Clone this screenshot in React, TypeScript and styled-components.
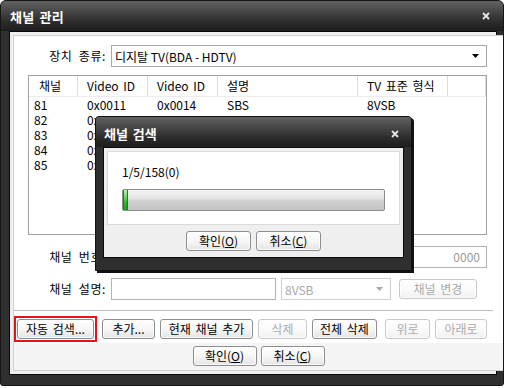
import React from "react";
import styled, { createGlobalStyle, css } from "styled-components";

const Global = createGlobalStyle`
  html, body { margin: 0; padding: 0; background: #ffffff; }
  body {
    font-family: "Noto Sans CJK KR", "Liberation Sans", sans-serif;
    font-size: 12px;
    color: #000;
  }
  * { box-sizing: border-box; }
`;

const Window = styled.div`
  position: relative;
  width: 504px;
  height: 386px;
  background: #2f2f2f;
  border: 1px solid #151515;
  border-radius: 6px 6px 3px 3px;
  display: flex;
  flex-direction: column;
  overflow: hidden;
`;

const titleGradient = css`
  background: linear-gradient(#626262 0%, #464646 35%, #2c2c2c 70%, #1d1d1d 100%);
`;

const TitleBar = styled.div`
  height: 30px;
  flex: none;
  ${titleGradient};
  display: flex;
  align-items: center;
  justify-content: space-between;
  padding: 0 13px 0 9px;
  color: #fff;
  font-weight: bold;
  font-size: 13px;
  letter-spacing: 0.2px;
  word-spacing: 2px;
`;

const CloseIcon = () => (
  <svg width="8" height="8" viewBox="0 0 8 8">
    <path d="M1 1 L7 7 M7 1 L1 7" stroke="#e6e6e6" strokeWidth="1.8" />
  </svg>
);

const Panel = styled.div`
  flex: 1;
  margin: 0 6px 10px 8px;
  border: 1px solid #0a0a0a;
  background: #efefef;
  padding: 3px;
  display: flex;
`;

const Inner = styled.div`
  flex: 1;
  border: 1px solid #d0d0d0;
  background: #f4f4f4;
  display: flex;
  flex-direction: column;
`;

const Body = styled.div`
  background: #fff;
  padding: 9px 16px 1px 14px;
  display: flex;
  flex-direction: column;
`;

const FieldRow = styled.div<{ $top?: number }>`
  display: flex;
  align-items: center;
  gap: 5px;
  height: 22px;
  margin-top: ${(p) => p.$top ?? 0}px;
`;

const Label = styled.div`
  width: 78px;
  text-align: right;
  white-space: nowrap;
  line-height: 22px;
  letter-spacing: 0.6px;
  word-spacing: 3px;
`;

const Select = styled.div<{ $w?: number; $disabled?: boolean }>`
  height: 22px;
  ${(p) => (p.$w ? `width: ${p.$w}px;` : "flex: 1;")}
  border: 1px solid ${(p) => (p.$disabled ? "#cfcfcf" : "#a8a8a8")};
  background: #fff;
  display: flex;
  align-items: center;
  justify-content: space-between;
  padding: 0 7px 0 3px;
  color: ${(p) => (p.$disabled ? "#a9a9a9" : "#000")};
  white-space: nowrap;
`;

const Arrow = ({ color }: { color: string }) => (
  <svg width="7" height="4" viewBox="0 0 7 4">
    <polygon points="0,0 7,0 3.5,4" fill={color} />
  </svg>
);

const Input = styled.div<{ $w?: number }>`
  height: 22px;
  ${(p) => (p.$w ? `width: ${p.$w}px;` : "flex: 1;")}
  border: 1px solid #b4b4b4;
  background: #fff;
  color: #9a9a9a;
  text-align: right;
  padding: 0 6px;
  line-height: 20px;
`;

const ListBox = styled.div`
  margin-top: 8px;
  height: 160px;
  border: 1px solid #a0a0a0;
  background: #fff;
  overflow: hidden;
`;

const gridCols = "49px 70px 70px 140px 90px 1fr";

const HeaderRow = styled.div`
  display: grid;
  grid-template-columns: ${gridCols};
  height: 21px;
  border-bottom: 1px solid #ececec;
`;

const HeaderCell = styled.div<{ $pad: number }>`
  border-right: 1px solid #dcdcdc;
  padding-left: ${(p) => p.$pad}px;
  line-height: 20px;
  white-space: nowrap;
  word-spacing: 2px;
`;

const DataRow = styled.div`
  display: grid;
  grid-template-columns: ${gridCols};
  height: 15px;
  line-height: 15px;
`;

const Cell = styled.div<{ $pad: number }>`
  padding-left: ${(p) => p.$pad}px;
  white-space: nowrap;
  overflow: hidden;
`;

const Separator = styled.div`
  height: 1px;
  background: #bdbdbd;
  margin: 10px -6px 0 -14px;
`;

const ButtonRow = styled.div`
  display: flex;
  align-items: center;
  gap: 5px;
  margin: 5px 0 0 -14px;
`;

const Highlight = styled.div`
  border: 2px solid #e8121c;
  padding: 1px;
  display: flex;
`;

const Button = styled.button<{ $w: number; $left?: number }>`
  width: ${(p) => p.$w}px;
  height: 20px;
  margin-left: ${(p) => p.$left ?? 0}px;
  padding: 0;
  border: 1px solid #8e8e8e;
  border-radius: 3px;
  background: linear-gradient(#ffffff 0%, #f6f6f6 50%, #e4e4e4 100%);
  box-shadow: inset 0 0 0 1px rgba(255, 255, 255, 0.8);
  font-family: inherit;
  font-size: 12px;
  line-height: 18px;
  word-spacing: 2px;
  color: #000;
  white-space: nowrap;
  &:disabled {
    border-color: #c9c9c9;
    color: #ababab;
    background: linear-gradient(#ffffff 0%, #fafafa 50%, #f0f0f0 100%);
  }
`;

const Mnemonic = styled.span`
  text-decoration: underline;
`;

const Footer = styled.div`
  display: flex;
  justify-content: center;
  gap: 4px;
  padding-top: 3px;
`;

/* Search dialog overlay */
const Dialog = styled.div`
  position: absolute;
  left: 94px;
  top: 115px;
  width: 317px;
  border: 1px solid #111;
  border-radius: 4px 4px 0 0;
  background: #2f2f2f;
  box-shadow: 2px 2px 0 #111;
  padding: 0 7px 12px;
  display: flex;
  flex-direction: column;
`;

const DialogTitle = styled.div`
  height: 30px;
  margin: 0 -7px;
  ${titleGradient};
  border-radius: 3px 3px 0 0;
  display: flex;
  align-items: center;
  justify-content: space-between;
  padding: 3px 12px 0 8px;
  color: #fff;
  font-weight: bold;
  font-size: 13px;
  word-spacing: 2px;
`;

const DialogPanel = styled.div`
  border: 1px solid #0a0a0a;
  background: #efefef;
  padding: 3px;
`;

const DialogBox = styled.div`
  background: #fff;
  border: 1px solid #dadada;
  padding: 13px 14px;
`;

const ProgressText = styled.div`
  line-height: 14px;
  height: 14px;
`;

const ProgressBar = styled.div`
  margin-top: 10px;
  height: 22px;
  border: 1px solid #8c8c8c;
  border-radius: 2px;
  background: linear-gradient(#f4f4f4 0%, #e6e6e6 40%, #cfcfcf 55%, #c4c4c4 100%);
  overflow: hidden;
`;

const ProgressFill = styled.div`
  height: 100%;
  background: linear-gradient(#b6f5b0 0%, #5fd85a 40%, #2cb82a 60%, #1f9c1f 100%);
  border-left: 1px solid #237a23;
  border-right: 1px solid #237a23;
`;

const DialogFooter = styled.div`
  display: flex;
  justify-content: center;
  gap: 5px;
  padding: 6px 0 3px;
`;

const headers: [string, number][] = [
  ["채널", 10],
  ["Video ID", 9],
  ["Video ID", 9],
  ["설명", 9],
  ["TV 표준 형식", 9],
  ["", 0],
];

const rows = [
  ["81", "0x0011", "0x0014", "SBS", "8VSB"],
  ["82", "0x0021", "0x0024", "KBS1", "8VSB"],
  ["83", "0x0031", "0x0034", "MBC", "8VSB"],
  ["84", "0x0041", "0x0044", "EBS", "8VSB"],
  ["85", "0x0051", "0x0054", "KBS2", "8VSB"],
];

const progress = 2;

export default function App() {
  return (
    <>
      <Global />
      <Window>
        <TitleBar>
          <span>채널 관리</span>
          <CloseIcon />
        </TitleBar>
        <Panel>
          <Inner>
            <Body>
              <FieldRow>
                <Label>장치 종류:</Label>
                <Select>
                  <span>디지탈 TV(BDA - HDTV)</span>
                  <Arrow color="#000" />
                </Select>
              </FieldRow>
              <ListBox>
                <HeaderRow>
                  {headers.map(([h, pad], i) => (
                    <HeaderCell key={i} $pad={pad}>
                      {h}
                    </HeaderCell>
                  ))}
                </HeaderRow>
                {rows.map((r) => (
                  <DataRow key={r[0]}>
                    {r.map((c, i) => (
                      <Cell key={i} $pad={i === 0 ? 5 : 9}>
                        {c}
                      </Cell>
                    ))}
                    <Cell $pad={0} />
                  </DataRow>
                ))}
              </ListBox>
              <FieldRow $top={11}>
                <Label>채널 번호:</Label>
                <Input>0000</Input>
              </FieldRow>
              <FieldRow $top={10}>
                <Label>채널 설명:</Label>
                <Input $w={165} />
                <Select $w={110} $disabled>
                  <span>8VSB</span>
                  <Arrow color="#a9a9a9" />
                </Select>
                <Button $w={78} $left={3} disabled>
                  채널 변경
                </Button>
              </FieldRow>
              <Separator />
              <ButtonRow>
                <Highlight>
                  <Button $w={77}>자동 검색...</Button>
                </Highlight>
                <Button $w={53}>추가...</Button>
                <Button $w={93}>현재 채널 추가</Button>
                <Button $w={49} disabled>
                  삭제
                </Button>
                <Button $w={65}>전체 삭제</Button>
                <Button $w={45} $left={3} disabled>
                  위로
                </Button>
                <Button $w={52} disabled>
                  아래로
                </Button>
              </ButtonRow>
            </Body>
            <Footer>
              <Button $w={64}>
                확인(<Mnemonic>O</Mnemonic>)
              </Button>
              <Button $w={64}>
                취소(<Mnemonic>C</Mnemonic>)
              </Button>
            </Footer>
          </Inner>
        </Panel>
        <Dialog>
          <DialogTitle>
            <span>채널 검색</span>
            <CloseIcon />
          </DialogTitle>
          <DialogPanel>
            <DialogBox>
              <ProgressText>1/5/158(0)</ProgressText>
              <ProgressBar>
                <ProgressFill style={{ width: `${progress}%` }} />
              </ProgressBar>
            </DialogBox>
            <DialogFooter>
              <Button $w={65}>
                확인(<Mnemonic>O</Mnemonic>)
              </Button>
              <Button $w={65}>
                취소(<Mnemonic>C</Mnemonic>)
              </Button>
            </DialogFooter>
          </DialogPanel>
        </Dialog>
      </Window>
    </>
  );
}
